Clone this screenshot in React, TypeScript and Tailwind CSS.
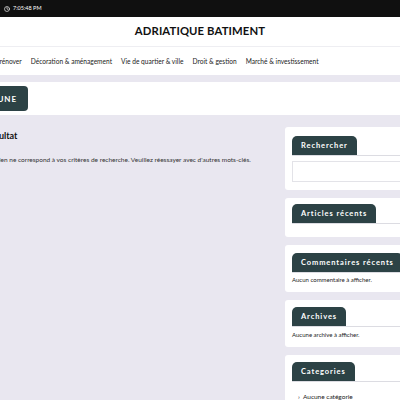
import { Clock } from 'lucide-react'

const navItems = [
  'Construire & rénover',
  'Décoration & aménagement',
  'Vie de quartier & ville',
  'Droit & gestion',
  'Marché & investissement',
]

function Widget({
  title,
  pt = 'pt-[7px]',
  children,
}: {
  title: string
  pt?: string
  children?: React.ReactNode
}) {
  return (
    <div className={`bg-white rounded-[3px] px-[7px] ${pt} pb-[8px]`}>
      <div className="flex border-b border-[#dcdce2]">
        <div className="bg-[#2c4245] text-white font-bold text-[7.5px] tracking-[0.12em] rounded-t-[5px] h-[19px] px-[9px] flex items-center whitespace-nowrap">
          {title}
        </div>
      </div>
      {children}
    </div>
  )
}

export default function App() {
  return (
    <div className="w-[400px] h-[400px] overflow-hidden bg-[#e9e7f0] text-[#222]" style={{ fontFamily: 'Lato, "Open Sans", sans-serif' }}>
      {/* Top bar */}
      <div className="h-[17px] bg-[#101010] flex items-center gap-[3px] pl-[4px] text-white">
        <Clock size={6} strokeWidth={2.5} />
        <span className="text-[5.5px]">7:05:48 PM</span>
      </div>

      {/* Header */}
      <div className="bg-white h-[30px] flex items-center justify-center border-b border-[#eeeef2]">
        <h1 className="font-bold text-[11.3px] tracking-[0.01em] text-[#111]">ADRIATIQUE BATIMENT</h1>
      </div>

      {/* Nav */}
      <div className="bg-white h-[28px] flex items-center overflow-hidden">
        <div className="flex gap-[9px] -ml-[39px] mt-[1px] whitespace-nowrap text-[6.6px] text-[#222]">
          {navItems.map((item) => (
            <span key={item}>{item}</span>
          ))}
        </div>
      </div>

      <div className="h-[7px]" />

      {/* Breaking band */}
      <div className="bg-white h-[33px] flex items-center overflow-hidden">
        <div className="-ml-[36px] bg-[#2c4245] text-white font-bold text-[8px] tracking-[0.12em] rounded-[4px] h-[25px] pl-[10px] pr-[11px] flex items-center whitespace-nowrap">
          À LA UNE
        </div>
      </div>

      {/* Content */}
      <div className="flex gap-[10px] pt-[12px]">
        <div className="w-[275px] shrink-0 overflow-hidden">
          <div className="pt-[2px]">
            <h2 className="-ml-[41px] font-bold text-[9px] text-[#111]">Aucun résultat</h2>
            <p className="-ml-[5px] mt-[12px] text-[6.5px] text-[#333] whitespace-nowrap">
              Rien ne correspond à vos critères de recherche. Veuillez réessayer avec d'autres mots-clés.
            </p>
          </div>
        </div>

        <div className="w-[150px] shrink-0 flex flex-col gap-[8px]">
          <Widget title="Rechercher" pt="pt-[9px]">
            <div className="mt-[5px] h-[21px] border border-[#e3e3e8] bg-white" />
          </Widget>
          <Widget title="Articles récents" pt="pt-[6px]">
            <div className="h-[5px]" />
          </Widget>
          <Widget title="Commentaires récents" pt="pt-[8px]">
            <p className="mt-[3px] text-[6px] leading-[8px] text-[#222]">Aucun commentaire à afficher.</p>
          </Widget>
          <Widget title="Archives">
            <p className="mt-[4px] text-[6px] leading-[8px] text-[#222]">Aucune archive à afficher.</p>
          </Widget>
          <Widget title="Categories" pt="pt-[7px]">
            <p className="mt-[11px] pl-[6px] text-[6.5px] leading-[8px] text-[#222]">›&nbsp;&nbsp;Aucune catégorie</p>
          </Widget>
        </div>
      </div>
    </div>
  )
}
